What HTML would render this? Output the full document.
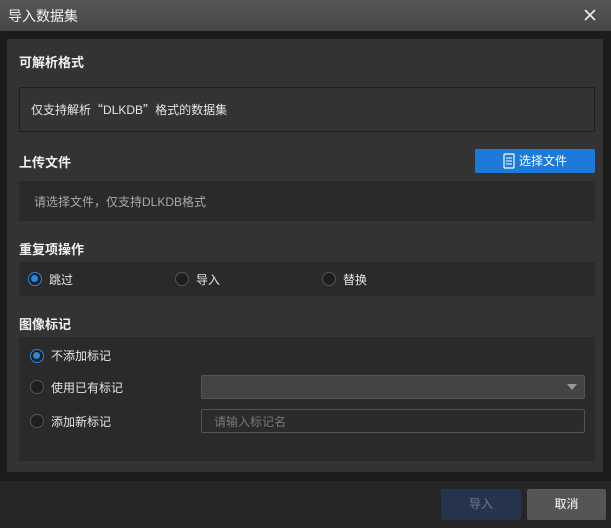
<!DOCTYPE html>
<html><head><meta charset="utf-8"><style>
*{box-sizing:border-box;margin:0;padding:0}
body{width:611px;height:528px;background:#1c1c1c;font-family:"Liberation Sans","Noto Sans CJK SC",sans-serif;font-size:12px;color:#e6e6e6;position:relative;overflow:hidden}
.a{position:absolute}
.title{left:0;top:0;width:611px;height:31px;background:linear-gradient(#555,#474747);}
.panel{left:7px;top:39px;width:596px;height:433px;background:#333}
.lbl{font-weight:bold;font-size:13px;color:#f0f0f0}
.box{background:#2a2a2a}
.radio{width:14px;height:14px;border-radius:50%;border:1px solid #555;background:#1e1e1e}
.radio.on{border:1.5px solid #2a86e0;background:#1e1e1e}
.radio.on::after{content:"";position:absolute;left:2px;top:2px;width:7px;height:7px;border-radius:50%;background:#2a86e0}
.footer{left:0;top:481px;width:611px;height:47px;background:#262626}
.q{font-family:"Noto Sans CJK SC",sans-serif}
</style></head><body>
<div class="a title"></div>
<div class="a" style="left:8px;top:6px;font-size:14px;color:#f2f2f2">导入数据集</div>
<svg class="a" style="left:584px;top:9px" width="12" height="12"><path d="M1 1L11 11M11 1L1 11" stroke="#eee" stroke-width="1.6"/></svg>
<div class="a panel"></div>
<div class="a lbl" style="left:19px;top:52px">可解析格式</div>
<div class="a" style="left:19px;top:87px;width:576px;height:45px;border:1px solid #1f1f1f;background:#333"></div>
<div class="a" style="left:31px;top:101px">仅支持解析<span class="q">“</span>DLKDB<span class="q">”</span>格式的数据集</div>
<div class="a lbl" style="left:19px;top:152px">上传文件</div>
<div class="a" style="left:475px;top:149px;width:120px;height:24px;background:#1e7ad8;border-radius:2px"></div>
<svg class="a" style="left:503px;top:153px" width="12" height="16"><rect x="1" y="1" width="10" height="14" rx="1" fill="none" stroke="#fff" stroke-width="1.2"/><path d="M3 5H9M3 8H9M3 11H9" stroke="#fff"/></svg>
<div class="a" style="left:519px;top:152px;color:#fff">选择文件</div>
<div class="a box" style="left:19px;top:181px;width:576px;height:40px"></div>
<div class="a" style="left:34px;top:193px;color:#aaa">请选择文件，仅支持DLKDB格式</div>
<div class="a lbl" style="left:19px;top:239px">重复项操作</div>
<div class="a box" style="left:19px;top:262px;width:576px;height:34px"></div>
<div class="a radio on" style="left:28px;top:272px"></div><div class="a" style="left:49px;top:271px">跳过</div>
<div class="a radio" style="left:175px;top:272px"></div><div class="a" style="left:196px;top:271px">导入</div>
<div class="a radio" style="left:322px;top:272px"></div><div class="a" style="left:343px;top:271px">替换</div>
<div class="a lbl" style="left:19px;top:314px">图像标记</div>
<div class="a box" style="left:19px;top:337px;width:576px;height:124px"></div>
<div class="a radio on" style="left:30px;top:349px"></div><div class="a" style="left:51px;top:347px">不添加标记</div>
<div class="a radio" style="left:30px;top:380px"></div><div class="a" style="left:51px;top:379px">使用已有标记</div>
<div class="a radio" style="left:30px;top:414px"></div><div class="a" style="left:51px;top:413px">添加新标记</div>
<div class="a" style="left:201px;top:375px;width:384px;height:24px;background:#444;border:1px solid #555;border-radius:2px"></div>
<svg class="a" style="left:567px;top:384px" width="10" height="6"><path d="M0 0H10L5 6Z" fill="#999"/></svg>
<div class="a" style="left:201px;top:409px;width:384px;height:24px;background:#2b2b2b;border:1px solid #555;border-radius:2px"></div>
<div class="a" style="left:214px;top:413px;color:#777">请输入标记名</div>
<div class="a footer"></div>
<div class="a" style="left:441px;top:489px;width:80px;height:31px;background:#25334d;border-radius:2px;color:#6c7a90;text-align:center;line-height:30px">导入</div>
<div class="a" style="left:527px;top:489px;width:79px;height:31px;background:#555;border-radius:2px;color:#fff;text-align:center;line-height:30px">取消</div>
</body></html>
